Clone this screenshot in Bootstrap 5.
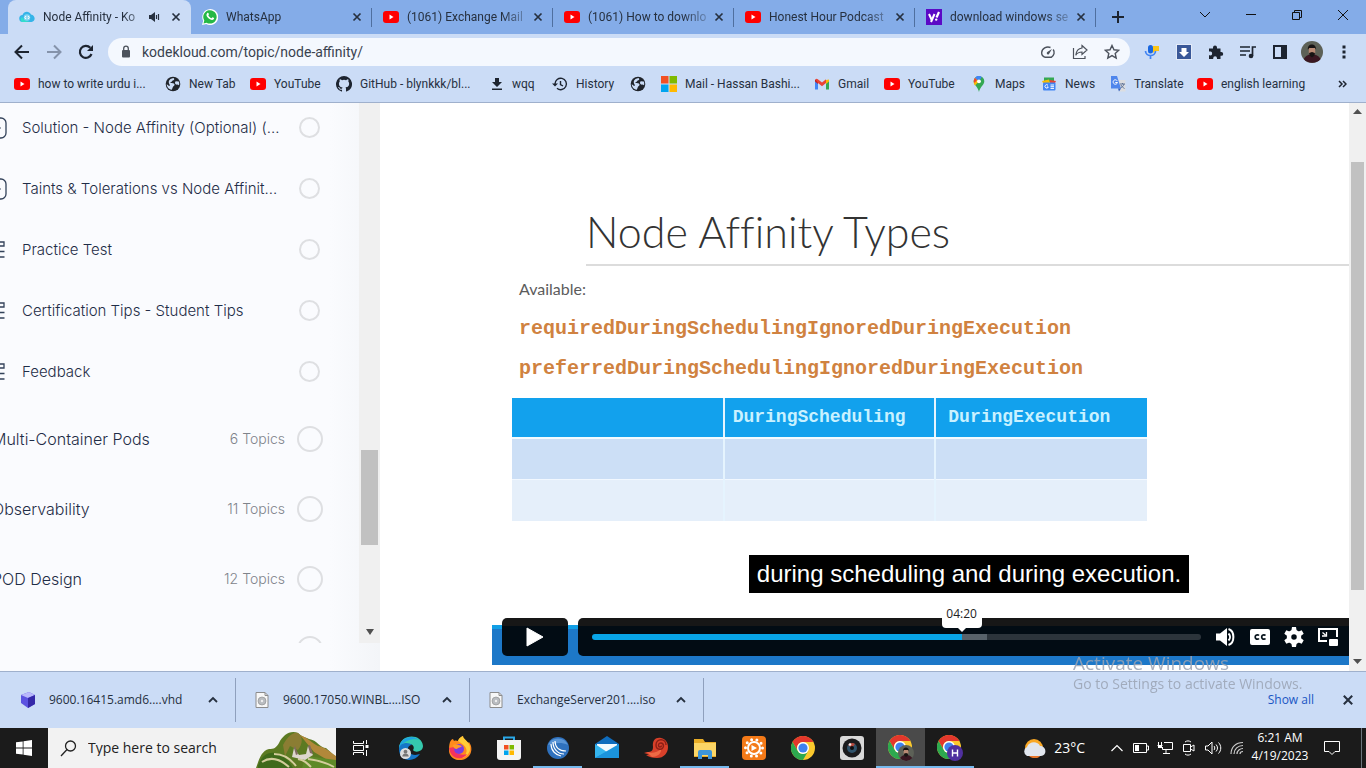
<!DOCTYPE html>
<html lang="en">
<head>
<meta charset="utf-8">
<meta name="viewport" content="width=device-width, initial-scale=1">
<title>Node Affinity - KodeKloud</title>
<link rel="stylesheet" href="https://cdn.jsdelivr.net/npm/bootstrap@5.3.0/dist/css/bootstrap.min.css">
<style>
  :root { --strip:#84ace8; --bar:#cbdcf6; --ink:#26303f; --line:#9fb0cc; }
  body { font-family:Roboto,"Noto Sans",sans-serif; font-size:12px; line-height:16px; color:var(--ink); background:#fff; }
  svg { display:block; flex:none; }
  button { border:0; background:none; padding:0; color:inherit; display:flex; align-items:center; justify-content:center; flex:none; }
  a { color:inherit; text-decoration:none; }
  .ui { font-family:"Open Sans","Noto Sans",sans-serif; }

  .tab-strip { background:var(--strip); height:34px; padding-left:8px; }
  .tab-item { flex:0 1 181px; min-width:0; padding:0 6px 0 11px; position:relative; }
  .tab-item a { min-width:0; flex:1; }
  .tab-title { flex:1; overflow:hidden; white-space:nowrap; -webkit-mask-image:linear-gradient(90deg,#000 80%,rgba(0,0,0,.3)); mask-image:linear-gradient(90deg,#000 80%,rgba(0,0,0,.3)); }
  .tab-active { flex-basis:183px; background:var(--bar); border-radius:8px 8px 0 0; }
  .tab-split::after { content:""; position:absolute; right:0; top:8px; width:1px; height:19px; background:#4f6f9f; }
  .tab-x { width:18px; height:18px; }
  .new-tab { width:28px; margin-left:8px; }
  .win-btn { width:46px; height:30px; }

  .tool-row { background:var(--bar); height:36px; padding:0 6px; }
  .tool-btn { width:32px; height:32px; }
  .address { background:#f4f8fe; height:28px; border-radius:14px; margin:0 6px; padding-left:12px; padding-right:2px; }
  .address input { border:0; background:none; outline:0; color:#39424f; font-size:14px; padding:0 0 0 10px; min-width:0; }
  .marks { background:var(--bar); height:33px; border-bottom:1px solid var(--line); padding:0 19px 4px 14px; }
  .marks-grid { display:grid; grid-template-columns:151px 85px 86px 154px 62px 78px 31px 153px 70px 87px 70px 69px 87px 1fr; overflow:hidden; }
  .marks-grid a { display:flex; align-items:center; gap:8px; white-space:nowrap; overflow:hidden; }

  .side { width:380px; flex:none; background:linear-gradient(90deg,#fafbfe 330px,#f3f5f8); font-family:Inter,"Noto Sans",sans-serif; font-weight:300; color:#1f2d47; }
  .side-scroll { flex:1 1 0; min-height:0; overflow:hidden; }
  .side-list { flex:1; min-width:0; overflow:hidden; margin-top:-6px; }
  .topic { height:61px; font-size:15px; padding-right:39px; }
  .topic svg { width:22px; }
  .topic span:nth-of-type(1) { flex:1; }
  .ring { width:21px; height:21px; border:2px solid #dedfe2; border-radius:50%; flex:none; }
  .lesson-group { padding-top:2px; }
  .lesson { height:70px; font-size:16px; padding-right:36px; }
  .lesson-name { flex:1; margin-left:-8px; white-space:nowrap; }
  .lesson-count { font-size:14px; color:#7f838b; margin-right:12px; }
  .lesson .ring { width:26px; height:26px; }
  .rail { background:#f0f0f0; }
  .side-rail { width:21px; padding:0 2px; }
  .side-thumb { height:95px; margin-top:347px; background:#c1c1c1; }
  .side-foot { height:28px; }
  .page-rail { width:17px; padding:6px 2px; }
  .page-thumb { flex:1; margin:47px 0 69px; background:#c1c1c1; }

  .viewer { flex:1; min-width:0; overflow:hidden; padding:0 0 6px 112px; background:#fff; }
  .slide { flex:1; padding-left:20px; }
  .slide-title { font-family:Lato,sans-serif; font-weight:300; font-size:43px; line-height:64px; color:#333; margin:0 0 0 74px; padding-top:97px; border-bottom:2px solid #dcdcdc; font-variant-ligatures:none; }
  .slide-lead { font-family:Lato,sans-serif; font-size:16px; line-height:24px; color:#5c5c5c; margin:11px 0 8px 7px; }
  .slide-code { font-family:"Liberation Mono",monospace; font-weight:700; font-size:20px; line-height:40px; color:#d08240; margin:0 0 0 7px; white-space:nowrap; }
  .grid-table { width:635px; margin-top:9px; border-collapse:collapse; table-layout:fixed; font-family:"Liberation Mono",monospace; }
  .grid-table th { height:40px; background:#12a1ed; color:#c9f1ff; font-size:18px; line-height:20px; padding:0 0 2px 8px; border-bottom:2px solid #f2fbff; }
  .grid-table th + th + th { padding-left:12px; }
  .grid-table td { height:41px; background:#ccdff6; border-bottom:1px solid #f2f8ff; }
  .grid-table tr:last-child td { height:42px; background:#e5effa; border-bottom:0; }
  .grid-table th + th, .grid-table td + td { border-left:2px solid #e5f4fe; }
  .caption-box { margin:34px 0 0 237px; width:440px; height:38px; line-height:38px; background:#000; color:#fff; font-family:"Liberation Sans",sans-serif; font-size:24px; text-align:center; white-space:nowrap; }
  .player { height:48px; padding:1px 0 9px 10px; gap:10px; background:linear-gradient(#fff 8px,#119fe6 8px 12px,#1d78c8 12px); }
  .player-box { background:linear-gradient(#171717 8px,#020c14 8px); border-radius:5px; color:#fff; }
  .seek-box { padding:0 4px 0 14px; }
  .play-btn { width:66px; }
  .seek { flex:1; position:relative; height:6px; }
  .seek input { appearance:none; -webkit-appearance:none; display:block; width:100%; height:6px; margin:0; border-radius:3px; background:linear-gradient(90deg,#08a5e8 var(--played),#58626a var(--played) var(--loaded),#2c343b var(--loaded)); }
  .seek input::-webkit-slider-thumb { -webkit-appearance:none; width:1px; height:6px; background:#08a5e8; }
  .seek-tip { position:absolute; left:var(--played); bottom:12px; transform:translateX(-50%); width:40px; height:24px; line-height:20px; text-align:center; background:#fff; color:#222; border-radius:4px; font-family:"Open Sans",sans-serif; }
  .seek-tip::after { content:""; position:absolute; left:16px; top:24px; border:4px solid transparent; border-top-color:#fff; border-bottom:0; }
  .ctl { width:34px; height:38px; }

  .shelf { background:var(--bar); height:57px; border-top:1px solid var(--line); padding:0 12px 0 2px; }
  .dl-item { width:234px; height:44px; border-right:1px solid #8fa0bd; padding:0 16px 0 18px; gap:13px; }
  .dl-item span { flex:1; }
  .dl-icon { width:16px; }
  .mark-note { position:absolute; left:1073px; top:650px; color:#9aa3b3; opacity:.85; pointer-events:none; font-family:"Open Sans",sans-serif; }
  .mark-note div { font-size:19px; line-height:26px; }
  .mark-note p { font-size:14px; line-height:16px; margin:0; }
  .show-all { color:#1a56c4; margin-right:28px; font-weight:500; }

  .task-row { background:#1b1b1b; height:40px; color:#fff; overflow:hidden; }
  .start-btn { width:48px; }
  .search-box { width:288px; background:#f2f2f2; color:#222; padding-left:12px; }
  .search-box input { border:0; background:none; outline:0; flex:1; min-width:0; font-size:14px; color:#222; padding:0 0 0 11px; }
  .search-box input::placeholder { color:#222; opacity:1; }
  .view-btn { width:50px; }
  .app { width:49px; height:40px; }
  .app-open { box-shadow:inset 0 -2px #76b9ed; }
  .app-now { background:#4a4a4a; }
  .weather { font-size:14px; margin-right:20px; }
  .tray { width:24px; height:40px; }
  .clock { width:62px; text-align:center; line-height:18px; padding-bottom:2px; }
  .notify { width:42px; }
  .peek { width:5px; }
</style>
</head>
<body class="d-flex flex-column min-vh-100 position-relative">

<svg width="0" height="0" class="position-absolute" aria-hidden="true">
  <symbol id="yt" viewBox="0 0 16 16"><rect y="2" width="16" height="12" rx="3" fill="#f00"/><path d="M6.500 5.500v5l4-2.500z" fill="#fff"/></symbol>
  <symbol id="x" viewBox="0 0 10 10"><path d="M1.500 1.500l7 7M8.500 1.500l-7 7" stroke="currentColor" stroke-width="1.700"/></symbol>
  <symbol id="earth" viewBox="0 0 16 16"><circle cx="8" cy="8" r="7.300" fill="#20242b"/><path d="M8.500 2c1.500 1 .5 2.500-1.200 2.700-.3 1.600-1.800 1-2 2.300 2 .3 3.700-.3 4.200 1.300.4 1.700-1.500 1.700-1.800 3.200l-.9 2.300C3.500 13.300 1.600 10.500 1.800 8 3 9.800 4.600 10.300 5 9.300 2.700 6 3.500 3 8.500 2zM10.800 5.300l3 .2c.6 1.500.5 2.800.2 3.800-1-1-2.800 0-3.600-1.300-.6-1-.5-2 .4-2.700z" fill="#cbdcf6"/></symbol>
  <symbol id="up" viewBox="0 0 12 12"><path d="M2 8l4-4 4 4" fill="none" stroke="currentColor" stroke-width="1.800"/></symbol>
  <symbol id="chrome" viewBox="0 0 24 24"><circle cx="12" cy="12" r="12" fill="#fbc92d"/><path d="M1.600 6A12 12 0 0 1 22.400 6H12a6 6 0 0 0-5.200 9z" fill="#e3372c"/><path d="M1.600 6A12 12 0 0 0 12 24l5.200-9a6 6 0 0 1-10.400 0z" fill="#2da94f"/><circle cx="12" cy="12" r="6" fill="#fff"/><circle cx="12" cy="12" r="4.600" fill="#3f82ee"/></symbol>
  <symbol id="face" viewBox="0 0 24 24"><circle cx="12" cy="12" r="12" fill="#5d6157"/><path d="M3 19.500a12 12 0 0 0 18.500 0c-3-4-6-5-9.500-5s-6 1-9 5z" fill="#3a1722"/><path d="M8.500 6h7v7l-3.500 4-3.500-3z" fill="#b98a74"/><path d="M7.500 9.500c-1-7.500 9.500-7.500 9 0l-1.200-2H9zM8.800 13l3.200-1 3.200 1-.7 3-2.500 2-2.500-2z" fill="#171313"/></symbol>
  <symbol id="disc" viewBox="0 0 14 16"><path d="M1 .5h9l3 3v12H1z" fill="#f7f7f7" stroke="#8c8c8c"/><path d="M10 .5v3h3" fill="none" stroke="#8c8c8c"/><circle cx="7" cy="9" r="4" fill="#b9bcc0" stroke="#8c8c8c" stroke-width=".6"/><circle cx="7" cy="9" r="1.200" fill="#eee"/></symbol>
  <symbol id="video" viewBox="0 0 22 22"><rect x="-12" y="1" width="18" height="20" rx="5" fill="none" stroke="#33425a" stroke-width="1.300"/><path d="M-3 9l3.500 2-3.500 2" stroke="#33425a" fill="none"/></symbol>
  <symbol id="quiz" viewBox="0 0 22 22"><path d="M-4 3h8v4h-8M-4 12.500h8.500M-4 18h8.500" stroke="#33425a" stroke-width="1.300" fill="none"/></symbol>
</svg>

<header>
  <nav class="tab-strip d-flex align-items-stretch" aria-label="Tabs">
    <div class="tab-item tab-active d-flex align-items-center gap-1">
      <a href="#" class="d-flex align-items-center gap-2"><svg width="16" height="16" viewBox="0 0 16 16"><path d="M4 13a3.500 3.500 0 0 1-.5-7C5 2 10 1.500 12 5.500c4.500.5 5 7 .5 7.500z" fill="#35b4e8"/><path d="M3 13a3 3 0 0 1 0-5 14 14 0 0 0 8 5z" fill="#33dccd"/><circle cx="8" cy="8.500" r="3.200" fill="#8bd7f2"/><path d="M7 7L5.800 8.500 7 10M9 7l1.200 1.500L9 10" stroke="#fff" fill="none"/></svg><span class="tab-title">Node Affinity - Ko</span></a>
      <button aria-label="Mute tab"><svg width="16" height="12" viewBox="4 0 16 12"><path d="M6 4h2l4-3v10L8 8H6z" fill="currentColor"/><path d="M13.500 4v4M15.500 3v6" stroke="currentColor" stroke-width="1.200"/></svg></button>
      <button class="tab-x" aria-label="Close tab"><svg width="10" height="10"><use href="#x"/></svg></button>
    </div>
    <div class="tab-item tab-split d-flex align-items-center gap-1">
      <a href="#" class="d-flex align-items-center gap-2"><svg width="16" height="16" viewBox="0 0 16 16"><path d="M0 16l1.200-4.200A8 8 0 1 1 4.300 15z" fill="#fff"/><path d="M1.500 14.500l.8-3A6.700 6.700 0 1 1 4.600 13.700z" fill="#25b846"/><path d="M5.300 4c1-.7 1.400.4 1.600 1.300.1.500-.8.900-.5 1.300.8 1.400 1.600 2 2.900 2.600.5.200.9-1.100 1.300-.9 2 .8 1.700 1 1.100 2-1.500 1.500-4 .2-5.500-1.300C4.500 7.400 3.700 5.500 5.300 4z" fill="#fff"/></svg><span class="tab-title">WhatsApp</span></a>
      <button class="tab-x" aria-label="Close tab"><svg width="10" height="10"><use href="#x"/></svg></button>
    </div>
    <div class="tab-item tab-split d-flex align-items-center gap-1">
      <a href="#" class="d-flex align-items-center gap-2"><svg width="16" height="16"><use href="#yt"/></svg><span class="tab-title">(1061) Exchange Mail</span></a>
      <button class="tab-x" aria-label="Close tab"><svg width="10" height="10"><use href="#x"/></svg></button>
    </div>
    <div class="tab-item tab-split d-flex align-items-center gap-1">
      <a href="#" class="d-flex align-items-center gap-2"><svg width="16" height="16"><use href="#yt"/></svg><span class="tab-title">(1061) How to downlo</span></a>
      <button class="tab-x" aria-label="Close tab"><svg width="10" height="10"><use href="#x"/></svg></button>
    </div>
    <div class="tab-item tab-split d-flex align-items-center gap-1">
      <a href="#" class="d-flex align-items-center gap-2"><svg width="16" height="16"><use href="#yt"/></svg><span class="tab-title">Honest Hour Podcast</span></a>
      <button class="tab-x" aria-label="Close tab"><svg width="10" height="10"><use href="#x"/></svg></button>
    </div>
    <div class="tab-item tab-split d-flex align-items-center gap-1">
      <a href="#" class="d-flex align-items-center gap-2"><svg width="16" height="16" viewBox="0 0 16 16"><rect width="16" height="16" fill="#5b09c6"/><path d="M3 5l2.500 5.500M8.500 5L5 13" stroke="#fff" stroke-width="2"/><path d="M10.500 8.500L13 3" stroke="#fff" stroke-width="2.200"/><circle cx="10.200" cy="10.600" r="1.200" fill="#fff"/></svg><span class="tab-title">download windows se</span></a>
      <button class="tab-x" aria-label="Close tab"><svg width="10" height="10"><use href="#x"/></svg></button>
    </div>
    <button class="new-tab" aria-label="New tab"><svg width="12" height="12" viewBox="0 0 12 12"><path d="M6 0v12M0 6h12" stroke="#1d2430" stroke-width="2"/></svg></button>
    <div class="d-flex ms-auto">
      <button class="win-btn" aria-label="Search tabs"><svg width="12" height="12" viewBox="0 0 12 12"><path d="M1 3l5 5 5-5" fill="none" stroke="#111"/></svg></button>
      <button class="win-btn" aria-label="Minimize"><svg width="10" height="10" viewBox="0 0 10 10"><path d="M0 4.500h10" stroke="#111"/></svg></button>
      <button class="win-btn" aria-label="Restore"><svg width="10" height="10" viewBox="0 0 10 10"><path d="M.5 2.500h7v7h-7zM2.500 2.500v-2h7v7h-2" fill="none" stroke="#111"/></svg></button>
      <button class="win-btn" aria-label="Close"><svg width="10" height="10" viewBox="0 0 10 10"><path d="M0 0l10 10M10 0L0 10" stroke="#111"/></svg></button>
    </div>
  </nav>

  <div class="tool-row d-flex align-items-center">
    <button class="tool-btn" aria-label="Back"><svg width="16" height="16" viewBox="0 0 16 16"><path d="M15 8H2M8 1.500L1.500 8 8 14.500" fill="none" stroke="#1d2430" stroke-width="2"/></svg></button>
    <button class="tool-btn" aria-label="Forward"><svg width="16" height="16" viewBox="0 0 16 16"><path d="M1 8h13M8 1.500L14.500 8 8 14.500" fill="none" stroke="#8593aa" stroke-width="2"/></svg></button>
    <button class="tool-btn" aria-label="Reload"><svg width="16" height="16" viewBox="0 0 16 16"><path d="M13.500 10A6 6 0 1 1 12.300 3.800" fill="none" stroke="#1d2430" stroke-width="2.200"/><path d="M15 1v6H9z" fill="#1d2430"/></svg></button>
    <div class="address d-flex align-items-center flex-grow-1">
      <svg width="12" height="14" viewBox="0 0 12 14"><rect x="2" y="5" width="8" height="7.500" rx="1" fill="#4c525c"/><path d="M3.700 5V3.500a2.300 2.300 0 0 1 4.600 0V5" fill="none" stroke="#4c525c" stroke-width="1.300"/></svg>
      <input type="text" class="flex-grow-1" aria-label="Address" value="kodekloud.com/topic/node-affinity/">
      <button class="tool-btn" aria-label="Performance"><svg width="16" height="16" viewBox="0 0 16 16"><path d="M5 13.300C2.500 12.300 1.500 10.500 1.700 8.500A6.300 5.800 0 0 1 10.500 3.500M13.200 5.500c1.700 2.500 1.200 5.800-2 7.800H5" fill="none" stroke="#4c525c" stroke-width="1.400"/><path d="M12 5L9.300 9.600a1.300 1.300 0 1 1-2-1.500z" fill="#4c525c"/></svg></button>
      <button class="tool-btn" aria-label="Share"><svg width="16" height="16" viewBox="0 0 16 16"><path d="M1.500 4v10.500H13V12M10 1.500L15 6l-5 4.500V8C7 8 5 9 3.800 11.200 4.200 7.300 6.300 4.500 10 4z" fill="none" stroke="#4c525c" stroke-width="1.200"/></svg></button>
      <button class="tool-btn" aria-label="Bookmark"><svg width="16" height="16" viewBox="0 0 16 16"><path d="M8 1.500l2 4.300 4.700.5-3.500 3.100 1 4.600L8 11.600 3.800 14l1-4.600L1.300 6.300 6 5.800z" fill="none" stroke="#4c525c" stroke-width="1.400"/></svg></button>
    </div>
    <button class="tool-btn" aria-label="Voice"><svg width="16" height="16" viewBox="0 0 16 16"><path d="M9 2h6v5h-4l-2 2z" fill="#fbc515"/><rect x="4" y="1" width="5" height="8.500" rx="2.500" fill="#1967e0"/><path d="M1.500 7c0 6 10 6 10 0M6.500 11.500V15" stroke="#4285f4" stroke-width="1.700" fill="none"/></svg></button>
    <button class="tool-btn" aria-label="Downloader"><svg width="16" height="16" viewBox="0 0 16 16"><rect x=".5" y=".5" width="15" height="15" fill="#3a5898" stroke="#e4ebf8"/><path d="M5.500 4h5v4H13l-5 5-5-5h2.500z" fill="#fff"/></svg></button>
    <button class="tool-btn" aria-label="Extensions"><svg width="16" height="16" viewBox="0 0 16 16"><path d="M1 4.500h4v-1a2 2 0 1 1 4 0v1h3.500v3.500h.8a1.900 1.900 0 1 1 0 3.800h-.8V15H9v-.8a1.900 1.900 0 1 0-3.800 0v.8H1v-3.700h.8a1.900 1.900 0 1 0 0-3.700H1z" fill="#1d2430"/></svg></button>
    <button class="tool-btn" aria-label="Media"><svg width="16" height="16" viewBox="0 0 16 16"><path d="M0 3h10M0 7h10M0 11h6" stroke="#1d2430" stroke-width="1.700"/><path d="M12.500 12V3H16" fill="none" stroke="#1d2430" stroke-width="1.700"/><circle cx="11" cy="12" r="2.300" fill="#1d2430"/></svg></button>
    <button class="tool-btn" aria-label="Side panel"><svg width="14" height="14" viewBox="0 0 14 14"><path d="M1 1h12v12H1z" fill="none" stroke="#1d2430" stroke-width="2"/><path d="M8 1h5v12H8z" fill="#1d2430"/></svg></button>
    <button class="tool-btn" aria-label="Profile"><svg width="22" height="22"><use href="#face"/></svg></button>
    <button class="tool-btn" aria-label="Menu"><svg width="4" height="16" viewBox="0 0 4 16"><path d="M.5 1.500h3v3h-3zM.5 6.500h3v3h-3zM.5 11.500h3v3h-3z" fill="#1d2430"/></svg></button>
  </div>

  <nav class="marks d-flex align-items-center" aria-label="Bookmarks">
    <div class="marks-grid flex-grow-1">
      <a href="#"><svg width="16" height="16"><use href="#yt"/></svg>how to write urdu i...</a>
      <a href="#"><svg width="16" height="16"><use href="#earth"/></svg>New Tab</a>
      <a href="#"><svg width="16" height="16"><use href="#yt"/></svg>YouTube</a>
      <a href="#"><svg width="16" height="16" viewBox="0 0 16 16"><path fill="#1d2430" d="M8 0a8 8 0 0 0-2.530 15.590c.4.070.55-.17.55-.38v-1.490c-2.010.37-2.530-.49-2.690-.94-.09-.23-.48-.94-.82-1.130-.28-.15-.68-.52-.01-.53.63-.01 1.080.58 1.230.82.720 1.210 1.870.87 2.330.66.070-.52.280-.87.510-1.070-1.780-.2-3.640-.89-3.640-3.950 0-.87.310-1.590.82-2.150-.08-.2-.36-1.020.08-2.120 0 0 .67-.21 2.200.82a7.600 7.600 0 0 1 4 0c1.530-1.040 2.200-.82 2.200-.82.440 1.100.160 1.920.080 2.120.510.560.820 1.270.820 2.150 0 3.070-1.870 3.750-3.650 3.950.290.250.540.730.540 1.480v2.200c0 .210.150.460.550.380A8 8 0 0 0 8 0z"/></svg>GitHub - blynkkk/bl...</a>
      <a href="#"><svg width="14" height="14" viewBox="0 0 14 14"><path d="M5 1h4v4h3L7 10 2 5h3zM2 11.500h10v1.500H2z" fill="#1d2430"/></svg>wqq</a>
      <a href="#"><svg width="16" height="16" viewBox="0 0 16 16"><path d="M3 8a5.700 5.700 0 1 1 2 4.300M8.500 5v3.500l2.500 1.500" fill="none" stroke="#1d2430" stroke-width="1.400"/><path d="M0 7.500h6L3 10.500z" fill="#1d2430"/></svg>History</a>
      <a href="#" aria-label="Web page"><svg width="16" height="16"><use href="#earth"/></svg></a>
      <a href="#"><svg width="16" height="16" viewBox="0 0 16 16"><path d="M0 0h7.500v7.500H0z" fill="#f25022"/><path d="M8.500 0H16v7.500H8.500z" fill="#7fba00"/><path d="M0 8.500h7.500V16H0z" fill="#00a4ef"/><path d="M8.500 8.500H16V16H8.500z" fill="#ffb900"/></svg>Mail - Hassan Bashi...</a>
      <a href="#"><svg width="16" height="16" viewBox="0 0 16 16"><path d="M1 4v9.500h3V7z" fill="#4285f4"/><path d="M12 7v6.500h3V4z" fill="#34a853"/><path d="M1 3.500v2l3 2.500V4z" fill="#c5221f"/><path d="M12 4v4l3-2.500v-2z" fill="#fbbc04"/><path d="M1.500 3.500c.5-1 1.500-1 2.300-.3L8 6.500l4-3.200V7L8 10.200 4 7z" fill="#ea4335"/></svg>Gmail</a>
      <a href="#"><svg width="16" height="16"><use href="#yt"/></svg>YouTube</a>
      <a href="#"><svg width="16" height="16" viewBox="0 0 16 16"><path d="M8 0a5.300 5.300 0 0 1 5.300 5.300C13.300 9 9 11 8 16 7 11 2.700 9 2.700 5.300A5.300 5.300 0 0 1 8 0z" fill="#34a853"/><path d="M4 2A5.300 5.300 0 0 1 10 .4L4.500 9C3 7.500 2 5 4 2z" fill="#4285f4"/><path d="M4 2l4 3.500-4 4C2.500 7.700 2 4.500 4 2z" fill="#fbbc04"/><path d="M4 2l2 2-2.500 3C2.500 5.500 2.600 3.500 4 2z" fill="#ea4335"/><path d="M5 1l4 3 1.700-3A5 5 0 0 0 5 1z" fill="#4285f4"/><circle cx="8" cy="5.300" r="1.900" fill="#fff"/></svg>Maps</a>
      <a href="#"><svg width="16" height="16" viewBox="0 0 16 16"><path d="M3 1.500h10V6H3z" fill="#34a853"/><path d="M1 5l7-1.500 1 3.500H2z" fill="#fbbc04"/><path d="M15 5L9 4v3h5z" fill="#ea4335"/><rect x="2" y="6.500" width="12.500" height="8" rx="1" fill="#4285f4"/><path d="M7 9.300a1.700 1.700 0 1 0 .3 1.700H6M9.500 9H13M9.500 10.700H13M9.500 12.400H13" stroke="#fff" fill="none"/></svg>News</a>
      <a href="#"><svg width="16" height="16" viewBox="0 0 16 16"><path d="M7 4h8.500v11.500H9z" fill="#dcdde0"/><path d="M1 0h6l4 12.500H1z" fill="#4f86ec"/><path d="M8 12.500h3l-2 3z" fill="#2f5fc0"/><path d="M7.200 4.800A2.200 2.200 0 1 0 7.500 6.500H5.300" fill="none" stroke="#fff"/><path d="M10 8h5M12.500 7v1M14 8c-.5 2-2 3.500-3.500 4M11 9c.5 1.500 2 2.500 3.500 3.500" stroke="#5e7397" fill="none"/></svg>Translate</a>
      <a href="#"><svg width="16" height="16"><use href="#yt"/></svg>english learning</a>
    </div>
    <button aria-label="More bookmarks"><svg width="9" height="8" viewBox="0 0 9 8"><path d="M1 1l3 3-3 3M5 1l3 3-3 3" fill="none" stroke="#1d2430" stroke-width="1.500"/></svg></button>
  </nav>
</header>

<main class="d-flex flex-grow-1">
  <aside class="side d-flex flex-column">
    <div class="side-scroll d-flex">
      <div class="side-list">
        <a href="#" class="topic d-flex align-items-center"><svg height="22"><use href="#video"/></svg><span>Solution - Node Affinity (Optional) (...</span><span class="ring"></span></a>
        <a href="#" class="topic d-flex align-items-center"><svg height="22"><use href="#video"/></svg><span>Taints &amp; Tolerations vs Node Affinit...</span><span class="ring"></span></a>
        <a href="#" class="topic d-flex align-items-center"><svg height="22"><use href="#quiz"/></svg><span>Practice Test</span><span class="ring"></span></a>
        <a href="#" class="topic d-flex align-items-center"><svg height="22"><use href="#quiz"/></svg><span>Certification Tips - Student Tips</span><span class="ring"></span></a>
        <a href="#" class="topic d-flex align-items-center"><svg height="22"><use href="#quiz"/></svg><span>Feedback</span><span class="ring"></span></a>
        <div class="lesson-group">
          <a href="#" class="lesson d-flex align-items-center"><span class="lesson-name">Multi-Container Pods</span><span class="lesson-count">6 Topics</span><span class="ring"></span></a>
          <a href="#" class="lesson d-flex align-items-center"><span class="lesson-name">Observability</span><span class="lesson-count">11 Topics</span><span class="ring"></span></a>
          <a href="#" class="lesson d-flex align-items-center"><span class="lesson-name">POD Design</span><span class="lesson-count">12 Topics</span><span class="ring"></span></a>
          <a href="#" class="lesson d-flex align-items-center"><span class="lesson-name">Services &amp; Networking</span><span class="lesson-count">8 Topics</span><span class="ring"></span></a>
        </div>
      </div>
      <div class="rail side-rail d-flex flex-column">
        <div class="side-thumb"></div>
        <svg class="mt-auto mx-auto mb-2" width="8" height="6" viewBox="0 0 8 6"><path d="M0 0h8L4 6z" fill="#505050"/></svg>
      </div>
    </div>
    <div class="side-foot"></div>
  </aside>

  <section class="viewer d-flex flex-column">
    <div class="slide">
      <h1 class="slide-title">Node Affinity Types</h1>
      <p class="slide-lead">Available:</p>
      <p class="slide-code">requiredDuringSchedulingIgnoredDuringExecution</p>
      <p class="slide-code">preferredDuringSchedulingIgnoredDuringExecution</p>
      <table class="grid-table">
        <thead><tr><th></th><th>DuringScheduling</th><th>DuringExecution</th></tr></thead>
        <tbody><tr><td></td><td></td><td></td></tr><tr><td></td><td></td><td></td></tr></tbody>
      </table>
      <div class="caption-box">during scheduling and during execution.</div>
    </div>
    <div class="player d-flex">
      <button class="player-box play-btn" aria-label="Play"><svg width="18" height="20" viewBox="0 0 18 20"><path d="M1 1v18l16-9z" fill="#fff" stroke="#fff" stroke-linejoin="round"/></svg></button>
      <div class="player-box seek-box rounded-end-0 d-flex align-items-center flex-grow-1">
        <div class="seek me-2" style="--played:60.700%;--loaded:64.800%">
          <input type="range" min="0" max="1000" value="607" aria-label="Seek">
          <output class="seek-tip">04:20</output>
        </div>
        <button class="ctl" aria-label="Volume"><svg width="20" height="20" viewBox="0 0 20 20"><path d="M0 6.500h4L11 1v18l-7-5.500H0z" fill="#fff"/><path d="M12.500 6.500c2 2 2 5 0 7M12.500 2c6.500 2 6.500 14 0 16" stroke="#fff" stroke-width="2" fill="none"/></svg></button>
        <button class="ctl" aria-label="Captions"><svg width="20" height="16" viewBox="0 0 20 16"><rect width="20" height="16" rx="2" fill="#fff"/><path d="M9 6.500A2.200 2.200 0 1 0 9 9.500M15.500 6.500a2.200 2.200 0 1 0 0 3" stroke="#07131c" stroke-width="1.700" fill="none"/></svg></button>
        <button class="ctl" aria-label="Settings"><svg width="20" height="20" viewBox="0 0 20 20"><circle cx="10" cy="10" r="5" fill="none" stroke="#fff" stroke-width="4.500"/><path d="M8 0h4l.7 4H7.300zM8 20h4l.7-4H7.300zM.3 6.700l2-3.400L6 4.700 3.500 9.200zM19.700 13.300l-2 3.400-3.700-1.400 2.500-4.500zM.3 13.300l2 3.400L6 15.300l-2.500-4.500zM19.700 6.700l-2-3.400L14 4.700l2.500 4.500z" fill="#fff"/></svg></button>
        <button class="ctl" aria-label="Picture in picture"><svg width="20" height="18" viewBox="0 0 20 18"><path d="M9 13H1V1h18v8" fill="none" stroke="#fff" stroke-width="2"/><rect x="11" y="11" width="9" height="7" rx="1" fill="#fff"/><path d="M4.500 4.500l3 2.500M8.500 4v4H4" stroke="#fff" stroke-width="1.300" fill="none"/></svg></button>
      </div>
    </div>
  </section>

  <div class="rail page-rail d-flex flex-column align-items-stretch">
    <svg class="mx-auto" width="9" height="6" viewBox="0 0 9 6"><path d="M0 5h9L4.500 0z" fill="#505050"/></svg>
    <div class="page-thumb"></div>
    <svg class="mx-auto" width="9" height="6" viewBox="0 0 9 6"><path d="M0 0h9L4.500 5z" fill="#505050"/></svg>
  </div>
</main>

<footer>
  <div class="shelf ui d-flex align-items-center">
    <div class="dl-item d-flex align-items-center"><svg class="dl-icon" height="16" viewBox="0 0 16 16"><path d="M1 3l8-3 6 3v9l-7 4-7-5z" fill="#5b52e0"/><path d="M1 3l8-3 6 3-7 3z" fill="#b9b8fb"/><path d="M8 6l7-3v9l-7 4z" fill="#3528a8"/></svg><span>9600.16415.amd6....vhd</span><button aria-label="Options"><svg width="12" height="12"><use href="#up"/></svg></button></div>
    <div class="dl-item d-flex align-items-center"><svg class="dl-icon" height="16"><use href="#disc"/></svg><span>9600.17050.WINBL....ISO</span><button aria-label="Options"><svg width="12" height="12"><use href="#up"/></svg></button></div>
    <div class="dl-item d-flex align-items-center"><svg class="dl-icon" height="16"><use href="#disc"/></svg><span>ExchangeServer201....iso</span><button aria-label="Options"><svg width="12" height="12"><use href="#up"/></svg></button></div>
    <button class="show-all ms-auto">Show all</button>
    <button aria-label="Close downloads"><svg width="12" height="12"><use href="#x"/></svg></button>
  </div>

  <div class="task-row ui d-flex align-items-stretch">
    <button class="start-btn" aria-label="Start"><svg width="16" height="16" viewBox="0 0 16 16"><path d="M0 2.300L6.700 1.400v6.200H0zM7.500 1.300L16 0v7.600H7.500zM0 8.400h6.700v6.200L0 13.700zM7.500 8.400H16V16l-8.500-1.300z" fill="#fff"/></svg></button>
    <div class="search-box d-flex align-items-center">
      <svg width="17" height="17" viewBox="0 0 17 17"><circle cx="10.500" cy="6" r="5" fill="none" stroke="#222" stroke-width="1.300"/><path d="M7 9.500L1 16" stroke="#222" stroke-width="1.300"/></svg>
      <input type="text" aria-label="Search" placeholder="Type here to search">
      <svg class="mt-1" width="80" height="36" viewBox="0 0 80 36"><path d="M0 36c3-8 5-17 13-19 5 0 7-1 10-6 4-8 11-13 19-10 4 4 7 4 11 6 8 1 11 9 17 9l10 9v11z" fill="#5c7a22"/><path d="M27 13C32 4 37 0 42 1c5 4 5 10 0 17l-8-4-5 10z" fill="#8b7d33"/><path d="M44 3c8 3 12 8 18 11 7 1 12 6 18 10v9L58 20z" fill="#b1883a"/><path d="M2 34c3-9 8-14 17-13 9 2 14 8 18 15H2z" fill="#3f6a1b"/><path d="M50 24l30 4v8H46z" fill="#5f8a28"/><path d="M6 30c9-6 18-3 27 5M18 22c9 0 16 4 22 12M52 27c9 1 17 3 26 8M42 27c6 1 9 4 13 8" fill="none" stroke="#d4cd9c" stroke-width="2"/><path d="M36 25l2-9 5 7 7-1 2-8 5 9-8 5z" fill="#ded6ce"/><path d="M38 16l1-2 3 8-2 1zM52 14l2-1 3 9-3-1z" fill="#816b60"/></svg>
    </div>
    <button class="view-btn" aria-label="Task view"><svg width="16" height="16" viewBox="0 0 16 16"><path d="M.5 1v2.500h10V1M.5 15v-2.500h10V15M.5 5.500h10v5H.5zM13.500 0v4M13.500 10v6" stroke="#fff" fill="none"/><path d="M12.500 5h3v3h-3z" fill="#fff"/></svg></button>
    <button class="app" aria-label="Edge"><svg width="24" height="24" viewBox="0 0 24 24"><path d="M0 12C1-3 23-3 24 10c0 6-8 7-10 4 2-3 0-6-4-6-5 0-10 3-10 6z" fill="#35c9ad"/><path d="M0 12C1 1 14-2 20 4 14 1 5 5 0 12z" fill="#1fa6e0"/><path d="M0 13c0-6 9-8 13-4-4 0-5 4-3 7 3 4 8 3 11 2-6 9-21 8-21-5z" fill="#1576c8"/><circle cx="6.500" cy="17.500" r="5.500" fill="#ddd"/><circle cx="6.500" cy="15.700" r="1.900" fill="#777"/><path d="M3.300 20.500c0-4 6.400-4 6.400 0z" fill="#777"/></svg></button>
    <button class="app" aria-label="Firefox"><svg width="24" height="24" viewBox="0 0 24 24"><path d="M2 6c1-2 2-3 3-3l1 2c2-1 3 0 4 0 1-3 3-4 5-5 0 3 3 4 5 7l1-1c2 3 3 6 2 10-3 11-21 11-22-1 0-3 0-6 1-9z" fill="#ff8a1c"/><path d="M15 0c0 4 8 5 7 14-1 4-4 7-8 8 8-6 5-12-4-17 1-3 3-4 5-5z" fill="#ffcd37"/><path d="M1 12c2 13 15 12 18 6-5 2-13 0-13-7z" fill="#f4335c"/><circle cx="11" cy="13" r="5" fill="#7a3de0"/><path d="M5 9c3-1 6 0 9 1-1 2-4 1-5 3-3 0-4-2-4-4z" fill="#ff9a28"/></svg></button>
    <button class="app" aria-label="Store"><svg width="24" height="24" viewBox="0 0 24 24"><path d="M7 5V1.500h10V5" fill="none" stroke="#2aa8e8" stroke-width="2"/><path d="M0 4h24v17a3 3 0 0 1-3 3H3a3 3 0 0 1-3-3z" fill="#f4f4f4"/><path d="M7 9h4.500v4.500H7z" fill="#f25022"/><path d="M12.500 9H17v4.500h-4.500z" fill="#7fba00"/><path d="M7 14.500h4.500V19H7z" fill="#00a4ef"/><path d="M12.500 14.500H17V19h-4.500z" fill="#ffb900"/></svg></button>
    <button class="app app-open" aria-label="Linphone"><svg width="22" height="22" viewBox="0 0 22 22"><circle cx="11" cy="11" r="11" fill="#2f71bd"/><path d="M1 8a11 11 0 0 1 20 0c-6-3-14-2-20 0z" fill="#5a95d6"/><path d="M8 4c0 6 4 10 11 10M6 5c0 7 5 12 11 12M4 7c0 7 5 11 10 12" stroke="#fff" stroke-width="1.200" fill="none"/></svg></button>
    <button class="app" aria-label="Mail"><svg width="24" height="24" viewBox="0 0 24 24"><path d="M0 8l12-8 12 8v14H0z" fill="#0f6cbd"/><path d="M2 8h20v8H2z" fill="#f3f9fd"/><path d="M0 8l12 8L0 22z" fill="#35b5ee"/><path d="M24 8L0 22h24z" fill="#1b94dc"/></svg></button>
    <button class="app" aria-label="Nautilus"><svg width="24" height="24" viewBox="0 0 24 24"><path d="M3 16c5 0 6-2 6-5C8 4 12 1 17 2c5 1 7 5 7 9 0 6-4 11-11 11-5 0-8-1-11-3l3-.5L0 17z" fill="#d8402a"/><path d="M3 16c5 2 11 0 14-3 1 5-5 8-9 8z" fill="#ef6a45"/><path d="M22 9c0-7-10-7-10 0 0 5 7 6 7.500 1 0-4-5-4-5-.500 0 2 3 2 3 0" fill="none" stroke="#8c1f16" stroke-width="1.400"/></svg></button>
    <button class="app app-open" aria-label="Files"><svg width="24" height="22" viewBox="0 0 24 22"><path d="M1 2h9l2 3h11v15H1z" fill="#e9ad26"/><path d="M1 6h22v13H1z" fill="#fcd666"/><path d="M5 22v-7a2 2 0 0 1 2-2h10a2 2 0 0 1 2 2v7h-4v-4H9v4z" fill="#3d95d8"/></svg></button>
    <button class="app" aria-label="Media"><svg width="24" height="24" viewBox="0 0 24 24"><rect width="24" height="24" rx="4" fill="#f47a18"/><circle cx="12" cy="12" r="8.500" fill="none" stroke="#fff" stroke-width="3" stroke-linecap="round" stroke-dasharray="0 5.340"/><circle cx="12" cy="12" r="6" fill="none" stroke="#fff" stroke-width="2"/><path d="M9.500 9v6l5.500-3z" fill="#fff"/></svg></button>
    <button class="app" aria-label="Chrome"><svg width="24" height="24"><use href="#chrome"/></svg></button>
    <button class="app" aria-label="Camera"><svg width="24" height="24" viewBox="0 0 24 24"><rect width="24" height="24" rx="3" fill="#d9d9d9"/><circle cx="12" cy="12" r="9.500" fill="#1b1b1d"/><circle cx="12" cy="12" r="5" fill="#30536b"/><path d="M8 9a5 5 0 0 1 7-1l-3 4z" fill="#b5473b"/><circle cx="12" cy="12" r="2" fill="#0c0d10"/><circle cx="10" cy="8.500" r="1.300" fill="#eee"/></svg></button>
    <button class="app app-open app-now" aria-label="Chrome, profile 1"><svg width="26" height="26" viewBox="0 0 26 26"><use href="#chrome" width="24" height="24"/><use href="#face" x="10" y="10" width="16" height="16"/></svg></button>
    <button class="app app-open" aria-label="Chrome, profile H"><svg width="26" height="26" viewBox="0 0 26 26"><use href="#chrome" width="24" height="24"/><circle cx="18" cy="18" r="8" fill="#50309f"/><path d="M15.500 14.500v7M20.500 14.500v7M15.500 18h5" stroke="#fff" stroke-width="1.400"/></svg></button>
    <button class="weather ms-auto gap-2" aria-label="Weather"><svg width="24" height="20" viewBox="0 0 24 20"><circle cx="12" cy="10" r="9" fill="#f9a825"/><path d="M5 18a5 5 0 0 1 0-9c2-6 11-6 13-1 7 0 7 10 1 10z" fill="#e1e6ee"/><path d="M7 18h11c-2 3-8 3-11 0z" fill="#e8762a"/></svg><span>23°C</span></button>
    <button class="tray" aria-label="Show hidden icons"><svg width="12" height="12" viewBox="0 0 12 12"><path d="M.5 9L6 3.500 11.500 9" fill="none" stroke="#fff" stroke-width="1.200"/></svg></button>
    <button class="tray" aria-label="Battery"><svg width="16" height="10" viewBox="0 0 16 10"><path d="M.5.5h13v9H.5zM14 3h1.500v4H14" fill="none" stroke="#fff"/><path d="M2 2h4v6H2z" fill="#fff"/></svg></button>
    <button class="tray" aria-label="Display"><svg width="16" height="14" viewBox="0 0 16 14"><path d="M7 1.500h8.500v7h-10V6M9 9v3.500M6 12.500h7M.5 4.500h5M1.500 1v3M4.500 1v3" fill="none" stroke="#fff"/><path d="M1 4h4v3H1z" fill="#fff"/></svg></button>
    <button class="tray" aria-label="Meet now"><svg width="14" height="16" viewBox="0 0 14 16"><path d="M1.500 4.500h7v7h-7zM8.500 7l3.500-2v6L8.500 9M3 2c2-1.500 4-1.500 6 0M3 14c2 1.500 4 1.500 6 0" fill="none" stroke="#fff"/></svg></button>
    <button class="tray" aria-label="Volume"><svg width="17" height="14" viewBox="0 0 17 14"><path d="M.5 5h2.500l4-4v12L3 9H.5zM9 5c1 1 1 3 0 4M11 3.500c2 2 2 5 0 7M13.500 1.500c3 3 3 8 0 11" fill="none" stroke="#fff"/></svg></button>
    <button class="tray" aria-label="Network"><svg width="14" height="14" viewBox="0 0 14 14"><path d="M1 13C1 6 6 1.500 13 1.500M4 13c0-5 4-8.500 9-8.500M7 13c0-3.500 3-5.500 6-5.500M10 13c0-1.500 1-2.500 3-2.500" fill="none" stroke="#ccc" stroke-width="1.200"/></svg></button>
    <button class="clock" aria-label="Clock"><span>6:21 AM<br>4/19/2023</span></button>
    <button class="notify" aria-label="Notifications"><svg width="16" height="16" viewBox="0 0 16 16"><path d="M.5 1.500h15v10H11l-3 3-3-3H.5z" fill="none" stroke="#fff"/></svg></button>
    <div class="peek border-start border-secondary ms-2"></div>
  </div>
</footer>

<div class="mark-note"><div>Activate Windows</div><p>Go to Settings to activate Windows.</p></div>

<script src="https://cdn.jsdelivr.net/npm/bootstrap@5.3.0/dist/js/bootstrap.bundle.min.js"></script>
</body>
</html>
